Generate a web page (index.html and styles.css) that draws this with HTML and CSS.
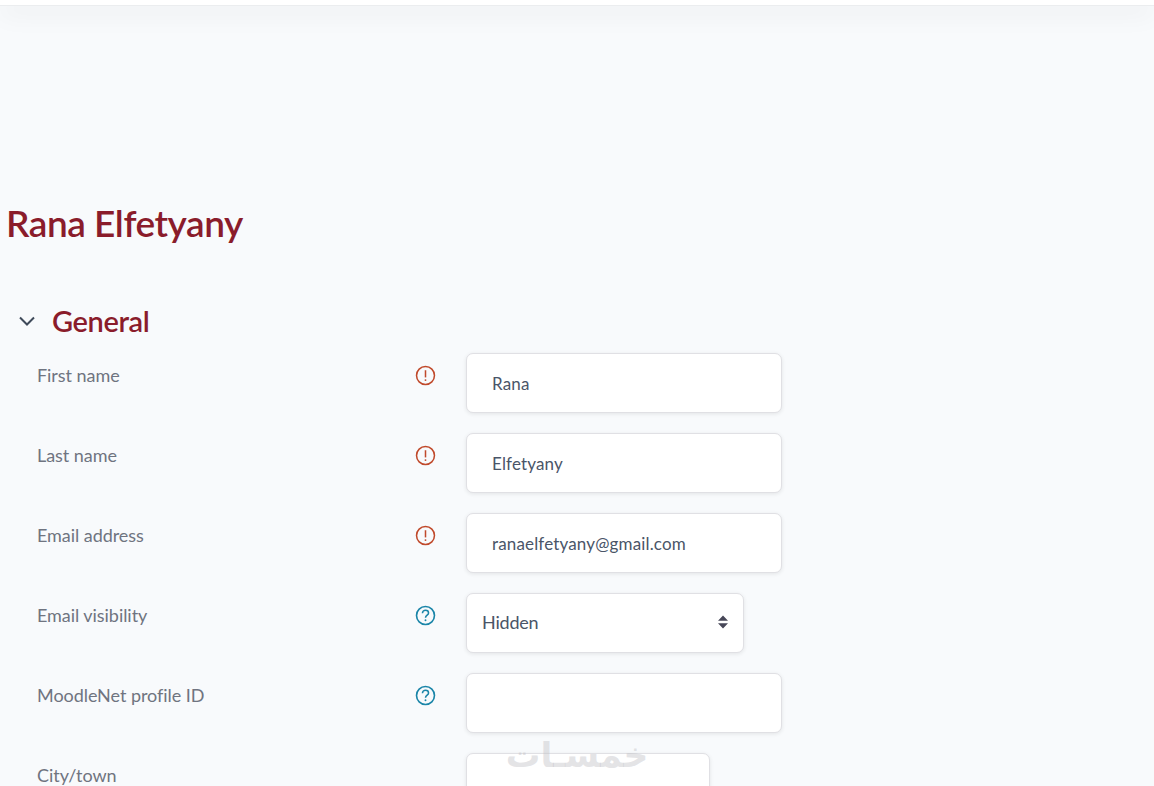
FILE: index.html
```html
<!DOCTYPE html>
<html lang="en">
<head>
<meta charset="utf-8">
<title>Rana Elfetyany</title>
<link rel="stylesheet" href="styles.css">
</head>
<body>
<header class="topbar"></header>
<main class="page">
  <h1 class="title">Rana Elfetyany</h1>
  <section class="section">
    <div class="section-head">
      <svg class="chevron" viewBox="0 0 16 10" width="16" height="10"><path d="M1 1.5 8 8.5 15 1.5" fill="none" stroke="#3f4a5a" stroke-width="2"/></svg>
      <h2 class="section-title">General</h2>
    </div>
    <div class="row">
      <label class="label">First name</label>
      <span class="icon-cell"><svg class="icon" viewBox="0 0 22 22"><circle cx="11" cy="11" r="9.4" fill="none" stroke="#c0492b" stroke-width="1.6"/><path d="M11 5.5V13" stroke="#c0492b" stroke-width="1.6"/><circle cx="11" cy="15.8" r="1" fill="#c0492b"/></svg></span>
      <div class="field"><input class="input input-text" type="text" value="Rana"></div>
    </div>
    <div class="row">
      <label class="label">Last name</label>
      <span class="icon-cell"><svg class="icon" viewBox="0 0 22 22"><circle cx="11" cy="11" r="9.4" fill="none" stroke="#c0492b" stroke-width="1.6"/><path d="M11 5.5V13" stroke="#c0492b" stroke-width="1.6"/><circle cx="11" cy="15.8" r="1" fill="#c0492b"/></svg></span>
      <div class="field"><input class="input input-text" type="text" value="Elfetyany"></div>
    </div>
    <div class="row">
      <label class="label">Email address</label>
      <span class="icon-cell"><svg class="icon" viewBox="0 0 22 22"><circle cx="11" cy="11" r="9.4" fill="none" stroke="#c0492b" stroke-width="1.6"/><path d="M11 5.5V13" stroke="#c0492b" stroke-width="1.6"/><circle cx="11" cy="15.8" r="1" fill="#c0492b"/></svg></span>
      <div class="field"><input class="input input-text" type="text" value="ranaelfetyany@gmail.com"></div>
    </div>
    <div class="row">
      <label class="label">Email visibility</label>
      <span class="icon-cell"><svg class="icon" viewBox="0 0 22 22"><circle cx="11" cy="11" r="9.4" fill="none" stroke="#1a85a8" stroke-width="1.7"/><path d="M7.8 8.6C7.8 6.7 9.2 5.6 11 5.6S14.2 6.8 14.2 8.4C14.2 10.6 11 10.8 11 13.4" fill="none" stroke="#1a85a8" stroke-width="1.6"/><circle cx="11" cy="16" r="1" fill="#1a85a8"/></svg></span>
      <div class="field"><div class="input select"><span>Hidden</span><svg class="sort" viewBox="0 0 10 14" width="10" height="14"><path d="M5 0.5 10 5.8H0Z M5 13.5 0 8.2H10Z" fill="#474758"/></svg></div></div>
    </div>
    <div class="row">
      <label class="label">MoodleNet profile ID</label>
      <span class="icon-cell"><svg class="icon" viewBox="0 0 22 22"><circle cx="11" cy="11" r="9.4" fill="none" stroke="#1a85a8" stroke-width="1.7"/><path d="M7.8 8.6C7.8 6.7 9.2 5.6 11 5.6S14.2 6.8 14.2 8.4C14.2 10.6 11 10.8 11 13.4" fill="none" stroke="#1a85a8" stroke-width="1.6"/><circle cx="11" cy="16" r="1" fill="#1a85a8"/></svg></span>
      <div class="field"><input class="input input-text" type="text" value=""></div>
    </div>
    <div class="row">
      <label class="label">City/town</label>
      <span class="icon-cell"></span>
      <div class="field"><input class="input input-text input-city" type="text" value=""></div>
    </div>
  </section>
</main>
<div class="watermark" dir="rtl" lang="ar">خمسـات</div>
</body>
</html>
```
FILE: styles.css
```css
html, body {
  margin: 0;
  height: 786px;
  overflow: hidden;
}
body {
  background: #f8fafc;
  font-family: "Lato", sans-serif;
  color: #4a5568;
  position: relative;
}
.topbar {
  height: 6px;
  background: #fff;
  border-bottom: 1px solid #ebedef;
  box-sizing: border-box;
  box-shadow: 0 5px 26px rgba(0, 0, 0, .12);
}
.page {
  padding: 195px 0 0 6px;
}
.title {
  margin: 0;
  font-family: "Lato", sans-serif;
  font-size: 37px;
  font-weight: 600;
  line-height: 44px;
  color: #8a1c2b;
  letter-spacing: -.45px;
}
.section {
  padding-top: 54px;
}
.section-head {
  display: flex;
  align-items: center;
  height: 44px;
  padding-left: 13px;
  gap: 17px;
  margin-bottom: 10px;
}
.section-title {
  margin: 0;
  font-family: "Lato", sans-serif;
  font-size: 29px;
  font-weight: 600;
  line-height: 44px;
  color: #8a1c2b;
  letter-spacing: -.4px;
}
.row {
  display: flex;
  align-items: flex-start;
  height: 60px;
  margin-bottom: 20px;
}
.label {
  width: 378px;
  padding: 10px 0 0 31px;
  box-sizing: border-box;
  font-family: "Lato", sans-serif;
  font-size: 18px;
  line-height: 24px;
  letter-spacing: -.05px;
  color: #6f7480;
}
.icon-cell {
  width: 82px;
  padding: 12px 0 0 31px;
  box-sizing: border-box;
  display: flex;
}
.icon {
  width: 21px;
  height: 21px;
}
.field {
  display: flex;
}
.input {
  box-sizing: border-box;
  height: 60px;
  width: 316px;
  background: #fff;
  border: 1px solid #e0e0e4;
  border-radius: 7px;
  box-shadow: 0 1px 4px rgba(0, 0, 0, .09);
  font-family: "Lato", sans-serif;
  color: #4a5568;
}
.input-text {
  padding: 0 25px;
  font-size: 17px;
  letter-spacing: .15px;
  outline: none;
  margin: 0;
}
.input-city {
  width: 244px;
}
.select {
  width: 278px;
  padding: 0 15px 2px 15px;
  display: flex;
  align-items: center;
  justify-content: space-between;
  font-size: 18px;
  letter-spacing: -.2px;
}
.watermark {
  position: absolute;
  left: 497px;
  top: 730px;
  width: 160px;
  text-align: center;
  font-family: "DejaVu Sans", sans-serif;
  font-size: 34.5px;
  font-weight: 700;
  line-height: 50px;
  color: rgba(190, 190, 195, .42);
  pointer-events: none;
}
```
